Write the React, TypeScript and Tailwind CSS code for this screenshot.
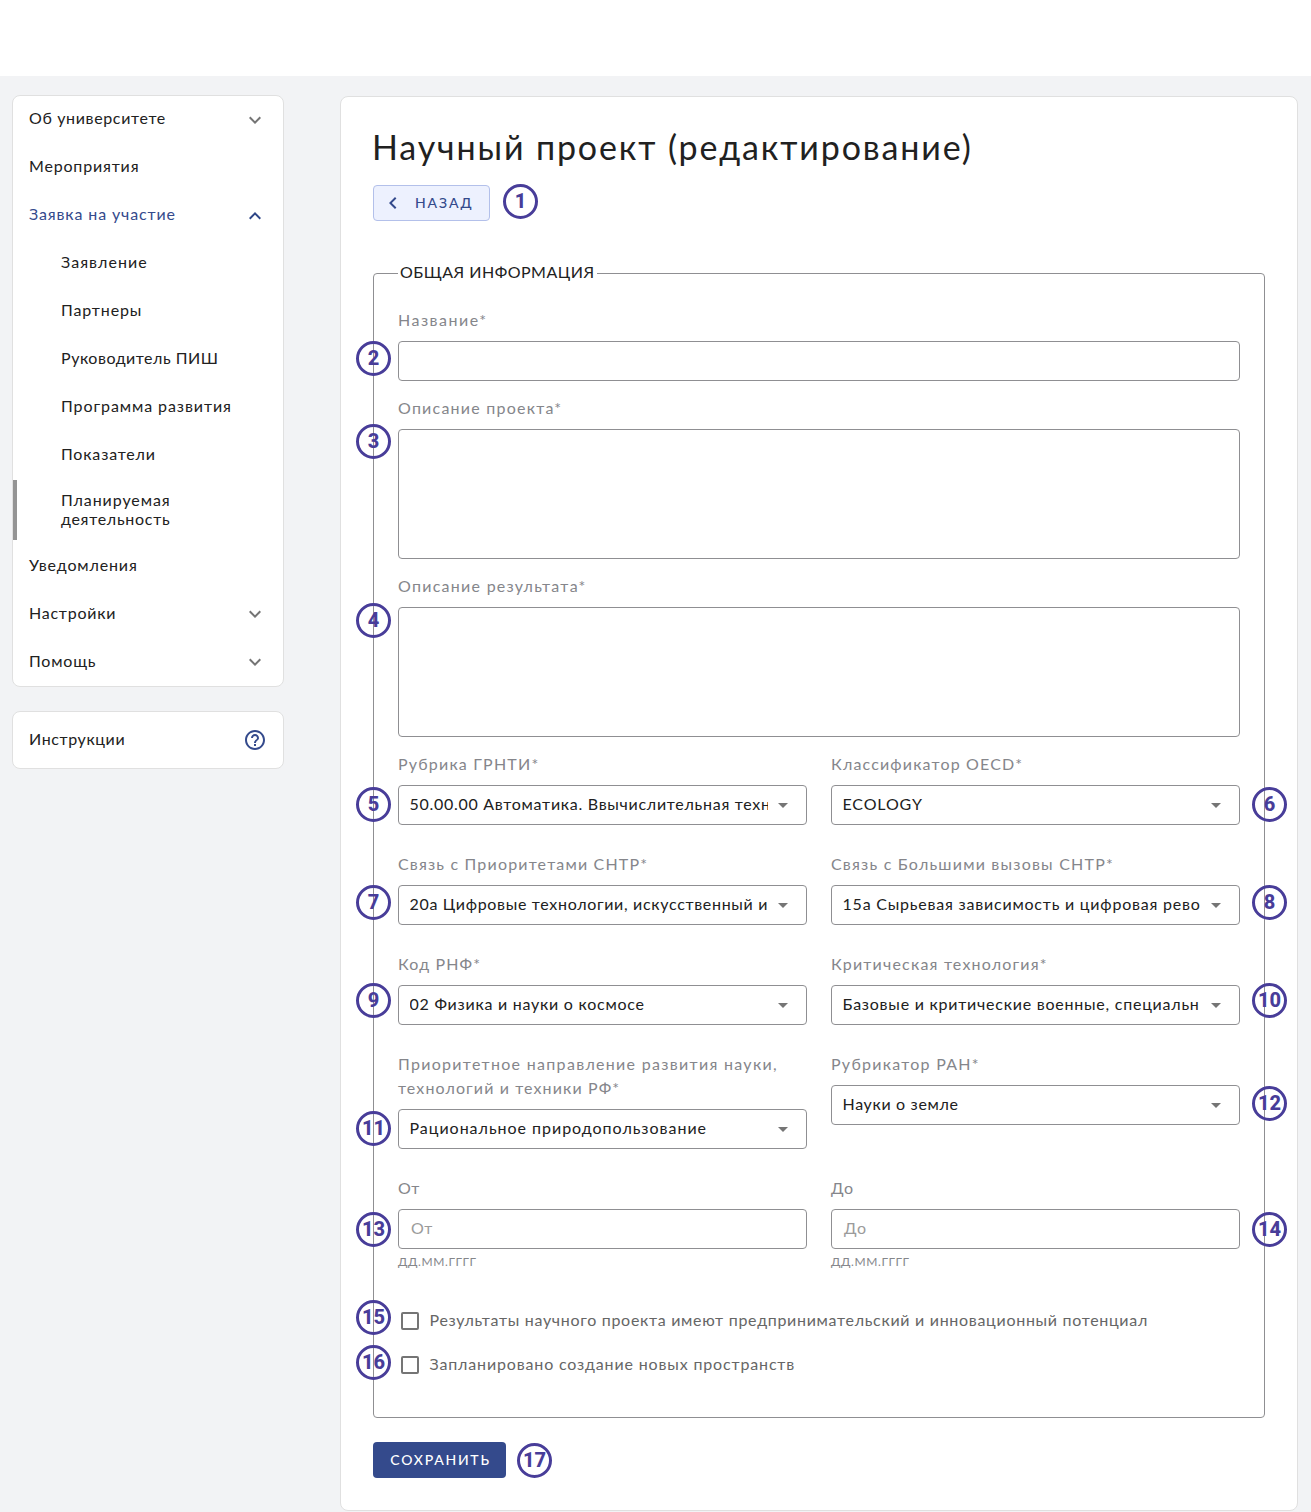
import type { ReactNode } from "react";

function Badge({ n, className }: { n: number; className: string }) {
  return (
    <span
      className={`absolute flex size-[35px] items-center justify-center rounded-full border-[3px] border-[#483d99] pb-[2px] font-['Roboto',sans-serif] text-[20px] leading-none font-extrabold tracking-normal text-[#483d99] ${className}`}
    >
      {n}
    </span>
  );
}

function Chevron({ className }: { className: string }) {
  return (
    <svg viewBox="0 0 24 24" className={`size-6 shrink-0 ${className}`} fill="currentColor">
      <path d="M7.41 8.59 12 13.17l4.59-4.58L18 10l-6 6-6-6z" />
    </svg>
  );
}

type NavItem = { text: string; track: string; sub?: boolean; open?: boolean; icon?: boolean; low?: boolean };

const topItems: NavItem[] = [
  { text: "Об университете", track: "tracking-[0.65px]", icon: true },
  { text: "Мероприятия", track: "tracking-[0.82px]" },
  { text: "Заявка на участие", track: "tracking-[0.871px]", icon: true, open: true },
  { text: "Заявление", track: "tracking-[1.05px]", sub: true },
  { text: "Партнеры", track: "tracking-[0.87px]", sub: true },
  { text: "Руководитель ПИШ", track: "tracking-[0.518px]", sub: true },
  { text: "Программа развития", track: "tracking-[0.926px]", sub: true },
  { text: "Показатели", track: "tracking-[0.829px]", sub: true },
];

const bottomItems: NavItem[] = [
  { text: "Уведомления", track: "tracking-[0.85px]", low: true },
  { text: "Настройки", track: "tracking-[0.764px]", icon: true, low: true },
  { text: "Помощь", track: "tracking-[0.8px]", icon: true, low: true },
];

function NavRow({ item }: { item: NavItem }) {
  return (
    <li
      className={`flex h-12 items-center justify-between pr-4 ${item.sub ? "pl-12" : "pl-4"} ${
        item.open ? "text-[#344a8c]" : "text-[#212121]"
      }`}
    >
      <span className={`${item.track} ${item.low ? "pb-[2px]" : "pb-[4px]"}`}>{item.text}</span>
      {item.icon && <Chevron className={item.open ? "rotate-180 text-[#2f4687]" : "text-[#757575]"} />}
    </li>
  );
}

function Label({ children, track }: { children: ReactNode; track: string }) {
  return <div className={`-mt-px mb-[9px] text-[16px] leading-6 text-[#85868b] ${track}`}>{children}</div>;
}

function Select({ text, track }: { text: string; track: string }) {
  return (
    <div className="flex h-10 items-center rounded-[4px] border border-[#8f8f92] pr-[11px] pl-[10.5px] text-[#212121]">
      <span className={`min-w-0 flex-1 overflow-hidden pb-[2px] whitespace-nowrap ${track}`}>{text}</span>
      <svg viewBox="0 0 24 24" className="ml-[3px] size-6 shrink-0 text-[#757575]" fill="currentColor">
        <path d="m7 10 5 5 5-5z" />
      </svg>
    </div>
  );
}

type FieldData = { n: number; label: ReactNode; lt: string; value: string; vt: string; badge: string };

const selects: FieldData[] = [
  { n: 5, label: "Рубрика ГРНТИ*", lt: "tracking-[1.2px]", value: "50.00.00 Автоматика. Ввычислительная техника", vt: "tracking-[0.72px]", badge: "-left-[42px] top-[34px]" },
  { n: 6, label: "Классификатор OECD*", lt: "tracking-[1.16px]", value: "ECOLOGY", vt: "tracking-[0.87px]", badge: "-right-[47px] top-[34px]" },
  { n: 7, label: "Связь с Приоритетами СНТР*", lt: "tracking-[1.18px]", value: "20а Цифровые технологии, искусственный и", vt: "tracking-[0.68px]", badge: "-left-[42px] top-[32px]" },
  { n: 8, label: "Связь с Большими вызовы СНТР*", lt: "tracking-[1.21px]", value: "15а Сырьевая зависимость и цифровая рево", vt: "tracking-[0.79px]", badge: "-right-[47px] top-[32px]" },
  { n: 9, label: "Код РНФ*", lt: "tracking-[1.142px]", value: "02 Физика и науки о космосе", vt: "tracking-[0.75px]", badge: "-left-[42px] top-[30px]" },
  { n: 10, label: "Критическая технология*", lt: "tracking-[1.19px]", value: "Базовые и критические военные, специальн", vt: "tracking-[0.76px]", badge: "-right-[47px] top-[30px]" },
  {
    n: 11,
    label: (
      <>
        <span className="tracking-[1.3px] whitespace-nowrap">Приоритетное направление развития науки,</span>
        <br />
        технологий и техники РФ*
      </>
    ),
    lt: "tracking-[1.11px]",
    value: "Рациональное природопользование",
    vt: "tracking-[0.975px]",
    badge: "-left-[42px] top-[58px]",
  },
  { n: 12, label: "Рубрикатор РАН*", lt: "tracking-[1.26px]", value: "Науки о земле", vt: "tracking-[0.67px]", badge: "-right-[47px] top-[33px]" },
];

const dates = [
  { n: 13, text: "От", track: "tracking-[0.4px]", badge: "-left-[42px] top-[35px]" },
  { n: 14, text: "До", track: "tracking-[0.9px]", badge: "-right-[47px] top-[35px]" },
];

const checks = [
  { n: 15, text: "Результаты научного проекта имеют предпринимательский и инновационный потенциал", track: "tracking-[0.7px]", badge: "-left-[42px] top-[1px]" },
  { n: 16, text: "Запланировано создание новых пространств", track: "tracking-[0.845px]", badge: "-left-[42px] top-[2px]" },
];

export default function App() {
  return (
    <div className="h-[1512px] overflow-hidden bg-[#f2f3f5] font-['Lato','Noto_Sans',sans-serif] text-[16px] leading-6 text-[#212121]">
      <header className="h-[76px] bg-white" />
      <div className="flex items-start pl-3">
        <aside className="mt-[19px] w-[272px] shrink-0">
          <ul className="overflow-hidden rounded-lg border border-[#e0e0e0] bg-white">
            {topItems.map((i) => (
              <NavRow key={i.text} item={i} />
            ))}
            <li className="mb-[2px] flex h-[60px] items-center border-l-4 border-[#949494] pb-[2px] pl-11 leading-[19px]">
              <span>
                <span className="tracking-[0.92px]">Планируемая</span>
                <br />
                <span className="tracking-[0.71px]">деятельность</span>
              </span>
            </li>
            {bottomItems.map((i) => (
              <NavRow key={i.text} item={i} />
            ))}
          </ul>
          <div className="mt-6 flex h-[58px] items-center justify-between rounded-lg border border-[#e0e0e0] bg-white pr-4 pl-4">
            <span className="pb-[2px] tracking-[0.6px]">Инструкции</span>
            <svg viewBox="0 0 24 24" className="size-6 text-[#344a8c]" fill="currentColor">
              <path d="M11 18h2v-2h-2v2zm1-16C6.48 2 2 6.48 2 12s4.48 10 10 10 10-4.48 10-10S17.52 2 12 2zm0 18c-4.41 0-8-3.59-8-8s3.59-8 8-8 8 3.59 8 8-3.59 8-8 8zm0-14c-2.21 0-4 1.79-4 4h2c0-1.1.9-2 2-2s2 .9 2 2c0 2-3 1.75-3 5h2c0-2.25 3-2.5 3-5 0-2.21-1.79-4-4-4z" />
            </svg>
          </div>
        </aside>

        <main className="mt-5 ml-14 h-[1415px] w-[958px] rounded-lg border border-[#e0e0e0] bg-white px-8 pt-[29px]">
          <h1 className="-ml-px h-[42px] text-[34px] leading-[42px] tracking-[1.87px] whitespace-nowrap">Научный проект (редактирование)</h1>
          <div className="relative mt-[17px] flex w-[117px]">
            <button className="flex h-9 w-[117px] items-center rounded-[4px] border border-[#b3c0ea] bg-[#edf1fe] pl-[7px] text-[14px] font-medium text-[#344a8c]">
              <Chevron className="rotate-90" />
              <span className="ml-[10px] tracking-[1.9px]">НАЗАД</span>
            </button>
            <Badge n={1} className="-top-px left-[130px]" />
          </div>

          <fieldset className="mt-10 h-[1157px] rounded-[4px] border border-[#8f8f92] px-6 pt-6">
            <legend className="h-6 px-[2px] leading-[22px] tracking-[0.5px]">ОБЩАЯ ИНФОРМАЦИЯ</legend>
            <div className="relative mb-4 flow-root">
              <Label track="tracking-[1.5px]">Название*</Label>
              <div className="h-10 rounded-[4px] border border-[#8f8f92]" />
              <Badge n={2} className="top-[32px] -left-[42px]" />
            </div>
            <div className="relative mb-4 flow-root">
              <Label track="tracking-[1.23px]">Описание проекта*</Label>
              <div className="h-[130px] rounded-[4px] border border-[#8f8f92]" />
              <Badge n={3} className="top-[27px] -left-[42px]" />
            </div>
            <div className="relative mb-4 flow-root">
              <Label track="tracking-[1.27px]">Описание результата*</Label>
              <div className="h-[130px] rounded-[4px] border border-[#8f8f92]" />
              <Badge n={4} className="top-[28px] -left-[42px]" />
            </div>
            <div className="grid grid-cols-2 gap-x-6 gap-y-7">
              {selects.map((f) => (
                <div key={f.n} className="relative min-w-0">
                  <Label track={f.lt}>{f.label}</Label>
                  <Select text={f.value} track={f.vt} />
                  <Badge n={f.n} className={f.badge} />
                </div>
              ))}
              {dates.map((d) => (
                <div key={d.n} className="relative min-w-0">
                  <Label track={d.track}>{d.text}</Label>
                  <div className={`flex h-10 items-center rounded-[4px] border border-[#8f8f92] px-3 pb-[2px] text-[#9b9b9b] ${d.track}`}>{d.text}</div>
                  <div className="mt-[3px] text-[12px] leading-5 tracking-[0.6px] text-[#85868b]">ДД.ММ.ГГГГ</div>
                  <Badge n={d.n} className={d.badge} />
                </div>
              ))}
            </div>
            <div className="mt-[27px]">
              {checks.map((c) => (
                <div key={c.n} className="relative flex h-11 items-center text-[#666666]">
                  <span className="ml-[2.5px] size-[18px] shrink-0 rounded-[2px] border-2 border-[#757575]" />
                  <span className={`ml-[11px] pb-[2px] whitespace-nowrap ${c.track}`}>{c.text}</span>
                  <Badge n={c.n} className={c.badge} />
                </div>
              ))}
            </div>
          </fieldset>

          <div className="relative mt-6 flex w-[133px]">
            <button className="h-9 w-[133px] rounded-[4px] bg-[#344a8c] pl-[2px] text-[14px] font-medium tracking-[1.75px] text-white">СОХРАНИТЬ</button>
            <Badge n={17} className="top-px left-[144px]" />
          </div>
        </main>
      </div>
    </div>
  );
}
